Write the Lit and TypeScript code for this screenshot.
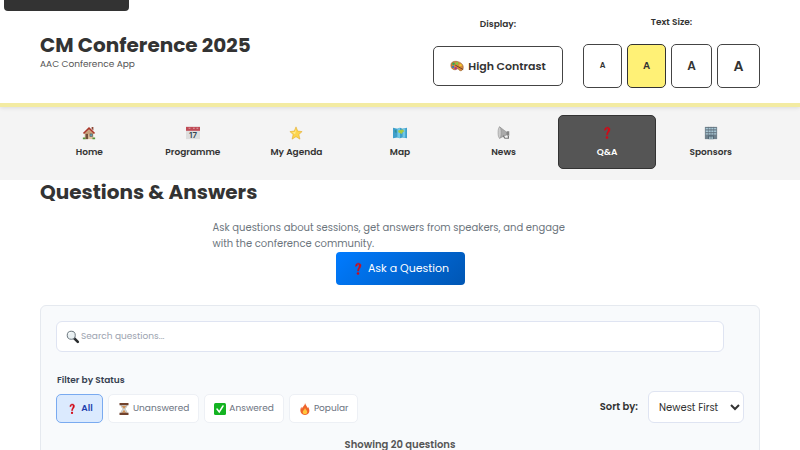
import { LitElement, html, css, svg } from "lit";
import { customElement, property, state } from "lit/decorators.js";
import { classMap } from "lit/directives/class-map.js";

const icons: Record<string, unknown> = {
  palette: svg`<path d="M1 7C1 3 5 2 9 3c4 1 7 4 6 8-1 3-4 3-5 1-1-1-2-1-3 0-3 1-6-1-6-5z" fill="#d58a3c" stroke="#8b5425" stroke-width=".6"/><circle cx="4" cy="5.500" r="1.500" fill="#35a853"/><circle cx="8" cy="5" r="1.500" fill="#85c83e"/><circle cx="3.500" cy="9" r="1.300" fill="#3276c8"/><circle cx="6.500" cy="10.500" r="1.400" fill="#b03090"/><circle cx="12" cy="7" r="1.400" fill="#f4c52d"/><path d="m6 7 9 5" stroke="#683626" stroke-width="1"/>`,
  house: svg`<path d="M3 7h10v8H3z" fill="#e2c4a0"/><path d="m8 1 7 7-1.500 1L8 4 2.500 9 1 8z" fill="#a9372a"/><path d="M11 1h2v4l-2-2z" fill="#8b4534"/><path d="M8 4 3 8.500V9h10v-.5z" fill="#c9a27c"/><path d="M4 9h3v6H4z" fill="#72503c"/><path d="M9 9h3v3H9z" fill="#609fb5" stroke="#5f4a40" stroke-width=".6"/><path d="M1 13h3v2H1zM12 13h3v2h-3z" fill="#56963c"/>`,
  calendar: svg`<path d="M0 1h16v14H0z" fill="#dedede"/><path d="M0 1h16v4.500H0z" fill="#bf4a55"/><path d="M3 2h2v1H3zM8 2h2v1H8zM12 2h2v1h-2z" fill="#e0a2a8"/><text x="8" y="13.500" text-anchor="middle" font-size="9" font-family="Inter, sans-serif" fill="#344650">17</text>`,
  star: svg`<path d="m8 1 2 4.800 5 .6-3.700 3.300L12.500 15 8 12.200 3.500 15l1.200-5.300L1 6.400l5-.6z" fill="#fcd44d" stroke="#dfa529" stroke-width=".6"/><path d="m8 3-1.500 4-3 .5L7 9z" fill="#fff09e"/>`,
  map: svg`<path d="m0 2 5 1 3-1 3 1 5-1v12l-5-1-3 1-3-1-5 1z" fill="#3f9fcb"/><path d="m5 3 3-1v12l-3-1zM11 3l3-.5v11L11 13z" fill="#70c8e5"/><path d="m6 5 5-1 2 2-2 1-1 2-2-1-2-1z" fill="#a7c941"/><path d="m2 4 2 1v3L2 7z" fill="#2f8f9a"/>`,
  horn: svg`<path d="m3 1 8 6v3l-8 4z" fill="#aaa" stroke="#777" stroke-width=".6"/><path d="M11 6h3v5h-3z" fill="#858585"/><path d="m7 11 2 3h4v-3" fill="none" stroke="#777" stroke-width="1.400"/><ellipse cx="3" cy="7.500" rx="1.800" ry="6.500" fill="#ccc" stroke="#888" stroke-width=".6"/>`,
  question: svg`<path d="M5.200 5.100C5 2.500 6.500 1.300 8.400 1.300c2 0 3.200 1.300 3 3.100-.1 2.600-2.600 3.300-2.600 6H7.400c0-3.100 1.900-3.900 1.900-6 0-1.100-.4-1.800-1.200-1.800-.7 0-1.100.7-1 1.600z" fill="#d20b18" stroke="#d20b18" stroke-width=".5"/><circle cx="8" cy="13.200" r="1.500" fill="#d20b18"/>`,
  building: svg`<path d="M1 1h14v14H1z" fill="#70818c"/><path d="M2 3h12M2 6h12M2 9h12" stroke="#a8c7d4" stroke-width="1.500"/><path d="M5 1v10M8 1v10M11 1v10" stroke="#5d7280" stroke-width=".7"/><path d="M5 11h6v4H5z" fill="#455d6c"/><path d="M6 12h1.500v3H6zM8.500 12H10v3H8.500z" fill="#b7d0d8"/>`,
  search: svg`<path d="m9.500 9.500 4 4" stroke="#292c2e" stroke-width="3" stroke-linecap="round"/><circle cx="6" cy="6" r="4.600" fill="#e9f0f2" stroke="#66717a" stroke-width="1.100"/><path d="M3.500 5C4 3.500 5 3 6 3" fill="none" stroke="#fff"/>`,
  hourglass: svg`<path d="M4 2h8c0 3-1 4-3 6 2 2 3 3 3 6H4c0-3 1-4 3-6-2-2-3-3-3-6z" fill="#dce2e2" stroke="#8c8c85" stroke-width=".6"/><path d="M5 4h6L8 8zM8 9l3 4H5z" fill="#d19056"/><path d="M2 0h12v3H2zM2 13h12v3H2z" fill="#70412c"/>`,
  check: svg`<rect x="0" y="0" width="16" height="16" rx="2" fill="#14b321"/><path d="m4 8 3 4 5-8" fill="none" stroke="#fff" stroke-width="2" stroke-linecap="round"/>`,
  fire: svg`<path d="M8 0c1 3 3 4 3 7l1-2c4 6 1 11-4 11S0 11 3 5l1 3c0-3 4-4 4-8z" fill="#ef642c"/><path d="M8 6c0 3 3 3 3 6 0 4-6 4-6 0 0-2 3-3 3-6z" fill="#ffc63d"/>`,
};

@customElement("emoji-icon")
class EmojiIcon extends LitElement {
  @property() name = "";
  static styles = css`
    :host { display: inline-flex; width: 14px; height: 14px; flex: none; }
    svg { width: 100%; height: 100%; }
  `;
  render() {
    return html`<svg viewBox="0 0 16 16" aria-hidden="true">${icons[this.name]}</svg>`;
  }
}

const pages = [
  ["house", "Home"],
  ["calendar", "Programme"],
  ["star", "My Agenda"],
  ["map", "Map"],
  ["horn", "News"],
  ["question", "Q&A"],
  ["building", "Sponsors"],
];
const filters = [
  ["question", "All"],
  ["hourglass", "Unanswered"],
  ["check", "Answered"],
  ["fire", "Popular"],
];
const sizes = ["small", "normal", "large", "huge"];

@customElement("app-root")
class AppRoot extends LitElement {
  @state() private filter = "All";
  @state() private size = "normal";

  static styles = css`
    :host { display: block; background: #fff; color: #333; font: 12px/16px Poppins, Inter, sans-serif; }
    * { box-sizing: border-box; }
    button, input, select { font-family: inherit; color: inherit; margin: 0; }
    button { cursor: pointer; }
    .skip { position: absolute; z-index: 1; left: 4px; top: -29px; width: 125px; height: 40px; border-radius: 4px; background: #333; }
    .top { position: relative; display: flex; justify-content: space-between; align-items: center; min-height: 107px; padding: 0 40px 1px; border-bottom: 4px solid #f3eba2; box-shadow: 0 1px 4px rgba(0, 0, 0, 0.1); }
    .title { margin: 0; font-size: 20px; line-height: 26px; font-weight: 700; white-space: nowrap; }
    .sub { margin: 0; font-size: 9px; line-height: 12px; color: #555; }
    .controls { display: flex; align-items: center; gap: 20px; }
    .group { display: flex; flex-direction: column; align-items: center; gap: 14px; font-size: 9px; font-weight: 600; }
    .row { display: flex; gap: 5px; }
    .contrast { display: flex; align-items: center; justify-content: center; gap: 4px; width: 130px; height: 40px; border: 1px solid #444; border-radius: 5px; background: #fff; font-size: 11px; font-weight: 600; padding: 0; white-space: nowrap; }
    .size { width: 39px; height: 44px; border: 1px solid #444; border-radius: 5px; background: #fff; font-weight: 600; padding: 0; }
    .small { font-size: 8px; }
    .normal { font-size: 10px; }
    .large { width: 41px; font-size: 12px; }
    .huge { width: 43px; font-size: 14px; }
    .size.on { background: #fff176; border-color: #333; }
    .nav { display: grid; grid-template-columns: repeat(7, 1fr); gap: 5px; padding: 8px 40px 11px; background: #f4f4f4; }
    .page { display: flex; flex-direction: column; align-items: center; justify-content: center; gap: 4px; height: 54px; padding-top: 2px; border: 1px solid transparent; border-radius: 5px; color: #333; font-size: 9px; font-weight: 600; text-decoration: none; }
    .page.on { background: #555; border-color: #333; color: #fff; }
    .main { padding: 0 40px; }
    .heading { margin: 0; font-size: 20px; line-height: 24px; font-weight: 700; }
    .intro { max-width: 375px; margin: 16px auto 0; color: #6c757d; font-size: 10px; }
    .ask { display: flex; align-items: center; justify-content: center; gap: 3px; width: 129px; height: 33px; margin: 0 auto; padding: 0; border: 0; border-radius: 4px; background: linear-gradient(135deg, #007bff, #0056b3); color: #fff; font-size: 11px; }
    .panel { margin-top: 20px; padding: 15px; border: 1px solid #e5e9ef; border-radius: 6px; background: #f8fafc; }
    .search { display: flex; align-items: center; gap: 1px; height: 31px; margin-right: 20px; padding: 0 9px; border: 1px solid #dfe4f2; border-radius: 6px; background: #fff; }
    .search input { flex: 1; min-width: 0; border: 0; outline: 0; padding: 0; background: none; font-size: 9px; }
    .search input::placeholder { color: #9ca3af; }
    .tools { display: flex; justify-content: space-between; align-items: flex-end; margin-top: 20px; }
    .legend { margin: 0 0 6px 1px; font-size: 9px; font-weight: 600; color: #374151; }
    .chip { display: flex; align-items: center; justify-content: center; gap: 3px; min-width: 47px; height: 29px; padding: 0 9px; border: 1px solid #edf0f5; border-radius: 5px; background: #fff; color: #6b7280; font-size: 9px; }
    .chip emoji-icon { width: 12px; height: 12px; }
    .chip.on { background: #dbeafe; border-color: #79aaf0; color: #1e40af; font-weight: 600; }
    .sort { display: flex; align-items: center; gap: 10px; font-size: 10px; font-weight: 600; }
    .sort select { width: 96px; height: 32px; padding: 0 0 0 6px; border: 1px solid #dfe4f2; border-radius: 6px; background: #fff; font-size: 10px; }
    .count { margin: 14px 0 0; text-align: center; font-size: 10px; font-weight: 600; color: #555; }
  `;

  render() {
    return html`
      <a class="skip" href="#main" aria-label="Skip"></a>
      <header class="top">
        <div>
          <h1 class="title">CM Conference 2025</h1>
          <p class="sub">AAC Conference App</p>
        </div>
        <div class="controls">
          <div class="group"><span>Display:</span>
            <button class="contrast"><emoji-icon name="palette"></emoji-icon>High Contrast</button>
          </div>
          <div class="group"><span>Text Size:</span>
            <div class="row">${sizes.map((s) => html`<button class=${classMap({ size: true, [s]: true, on: this.size === s })} @click=${() => (this.size = s)}>A</button>`)}</div>
          </div>
        </div>
      </header>
      <nav class="nav">${pages.map(([icon, label]) => html`<a href="#" class=${classMap({ page: true, on: label === "Q&A" })}><emoji-icon name=${icon}></emoji-icon>${label}</a>`)}</nav>
      <main class="main" id="main">
        <h2 class="heading">Questions &amp; Answers</h2>
        <p class="intro">Ask questions about sessions, get answers from speakers, and engage with the conference community.</p>
        <button class="ask"><emoji-icon name="question"></emoji-icon>Ask a Question</button>
        <section class="panel">
          <label class="search"><emoji-icon name="search"></emoji-icon><input type="search" aria-label="Search questions" placeholder="Search questions..." /></label>
          <div class="tools">
            <div>
              <h3 class="legend">Filter by Status</h3>
              <div class="row">${filters.map(([icon, label]) => html`<button class=${classMap({ chip: true, on: this.filter === label })} @click=${() => (this.filter = label)}><emoji-icon name=${icon}></emoji-icon>${label}</button>`)}</div>
            </div>
            <div class="sort"><label for="sort">Sort by:</label><select id="sort"><option>Newest First</option></select></div>
          </div>
          <p class="count">Showing 20 questions</p>
        </section>
      </main>
    `;
  }
}
